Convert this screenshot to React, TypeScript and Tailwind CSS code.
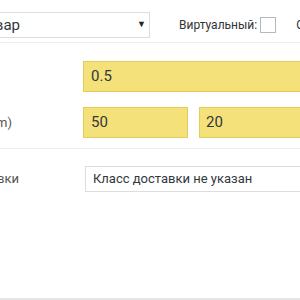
import React from "react";

export default function App() {
  const font = { fontFamily: 'Roboto, "Open Sans", "Noto Sans", sans-serif' };
  return (
    <div className="w-[300px] h-[300px] overflow-hidden bg-white relative" style={font}>
      {/* header row */}
      <div className="h-[43px] border-b border-[#eeeeee] flex items-start pt-[12px]">
        <div className="w-[150px] h-[26px] border border-[#dddddd] border-l-0 flex items-center shrink-0">
          <div className="w-[20px] flex justify-end overflow-hidden whitespace-nowrap text-[15px] text-[#32373c] leading-none">
            <span className="shrink-0">Простой товар</span>
          </div>
          <div className="flex-1" />
          <span className="text-[9px] text-[#222] mr-[3px]">▼</span>
        </div>
        <div className="w-px h-[25px] bg-[#dddddd] ml-[16px] mt-[0px]" />
        <div className="flex items-center h-[26px] ml-[13px] text-[12px] text-[#333] whitespace-nowrap">
          <span>Виртуальный:</span>
          <span className="ml-[3px] w-[16px] h-[16px] border border-[#b4b9be] bg-white inline-block" />
          <span className="ml-[20px]">Скачиваемый:</span>
        </div>
      </div>

      {/* weight / dimensions */}
      <div className="h-[106px] border-b border-[#eeeeee] flex flex-col pt-[18px] gap-[15px]">
        <div className="flex items-center">
          <div className="w-[83px] shrink-0" />
          <div className="flex-1 h-[31px] bg-[#f4e17a] border border-[#e2cc5c] flex items-center pl-[7px] text-[15px] text-[#32373c] -mr-[20px]">
            0.5
          </div>
        </div>
        <div className="flex items-center">
          <div className="w-[83px] shrink-0 flex">
            <div className="w-[12px] flex justify-end overflow-hidden whitespace-nowrap text-[13px] text-[#555]">
              <span className="shrink-0">Размеры (cm)</span>
            </div>
          </div>
          <div className="w-[105px] h-[31px] bg-[#f4e17a] border border-[#e2cc5c] flex items-center pl-[7px] text-[15px] text-[#32373c] shrink-0">
            50
          </div>
          <div className="w-[150px] ml-[11px] h-[31px] bg-[#f4e17a] border border-[#e2cc5c] flex items-center pl-[6px] text-[15px] text-[#32373c] shrink-0">
            20
          </div>
        </div>
      </div>

      {/* shipping class */}
      <div className="flex items-center pt-[17px]">
        <div className="w-[85px] shrink-0 flex">
          <div className="w-[19px] flex justify-end overflow-hidden whitespace-nowrap text-[13px] text-[#555]">
            <span className="shrink-0">Класс доставки</span>
          </div>
        </div>
        <div className="flex-1 h-[26px] border border-[#dddddd] border-r-0 flex items-center pl-[7px] text-[13px] text-[#32373c] whitespace-nowrap">
          Класс доставки не указан
        </div>
      </div>

      <div className="absolute left-0 right-0 bottom-0 h-[2px] bg-[#e5e5e5]" />
    </div>
  );
}
